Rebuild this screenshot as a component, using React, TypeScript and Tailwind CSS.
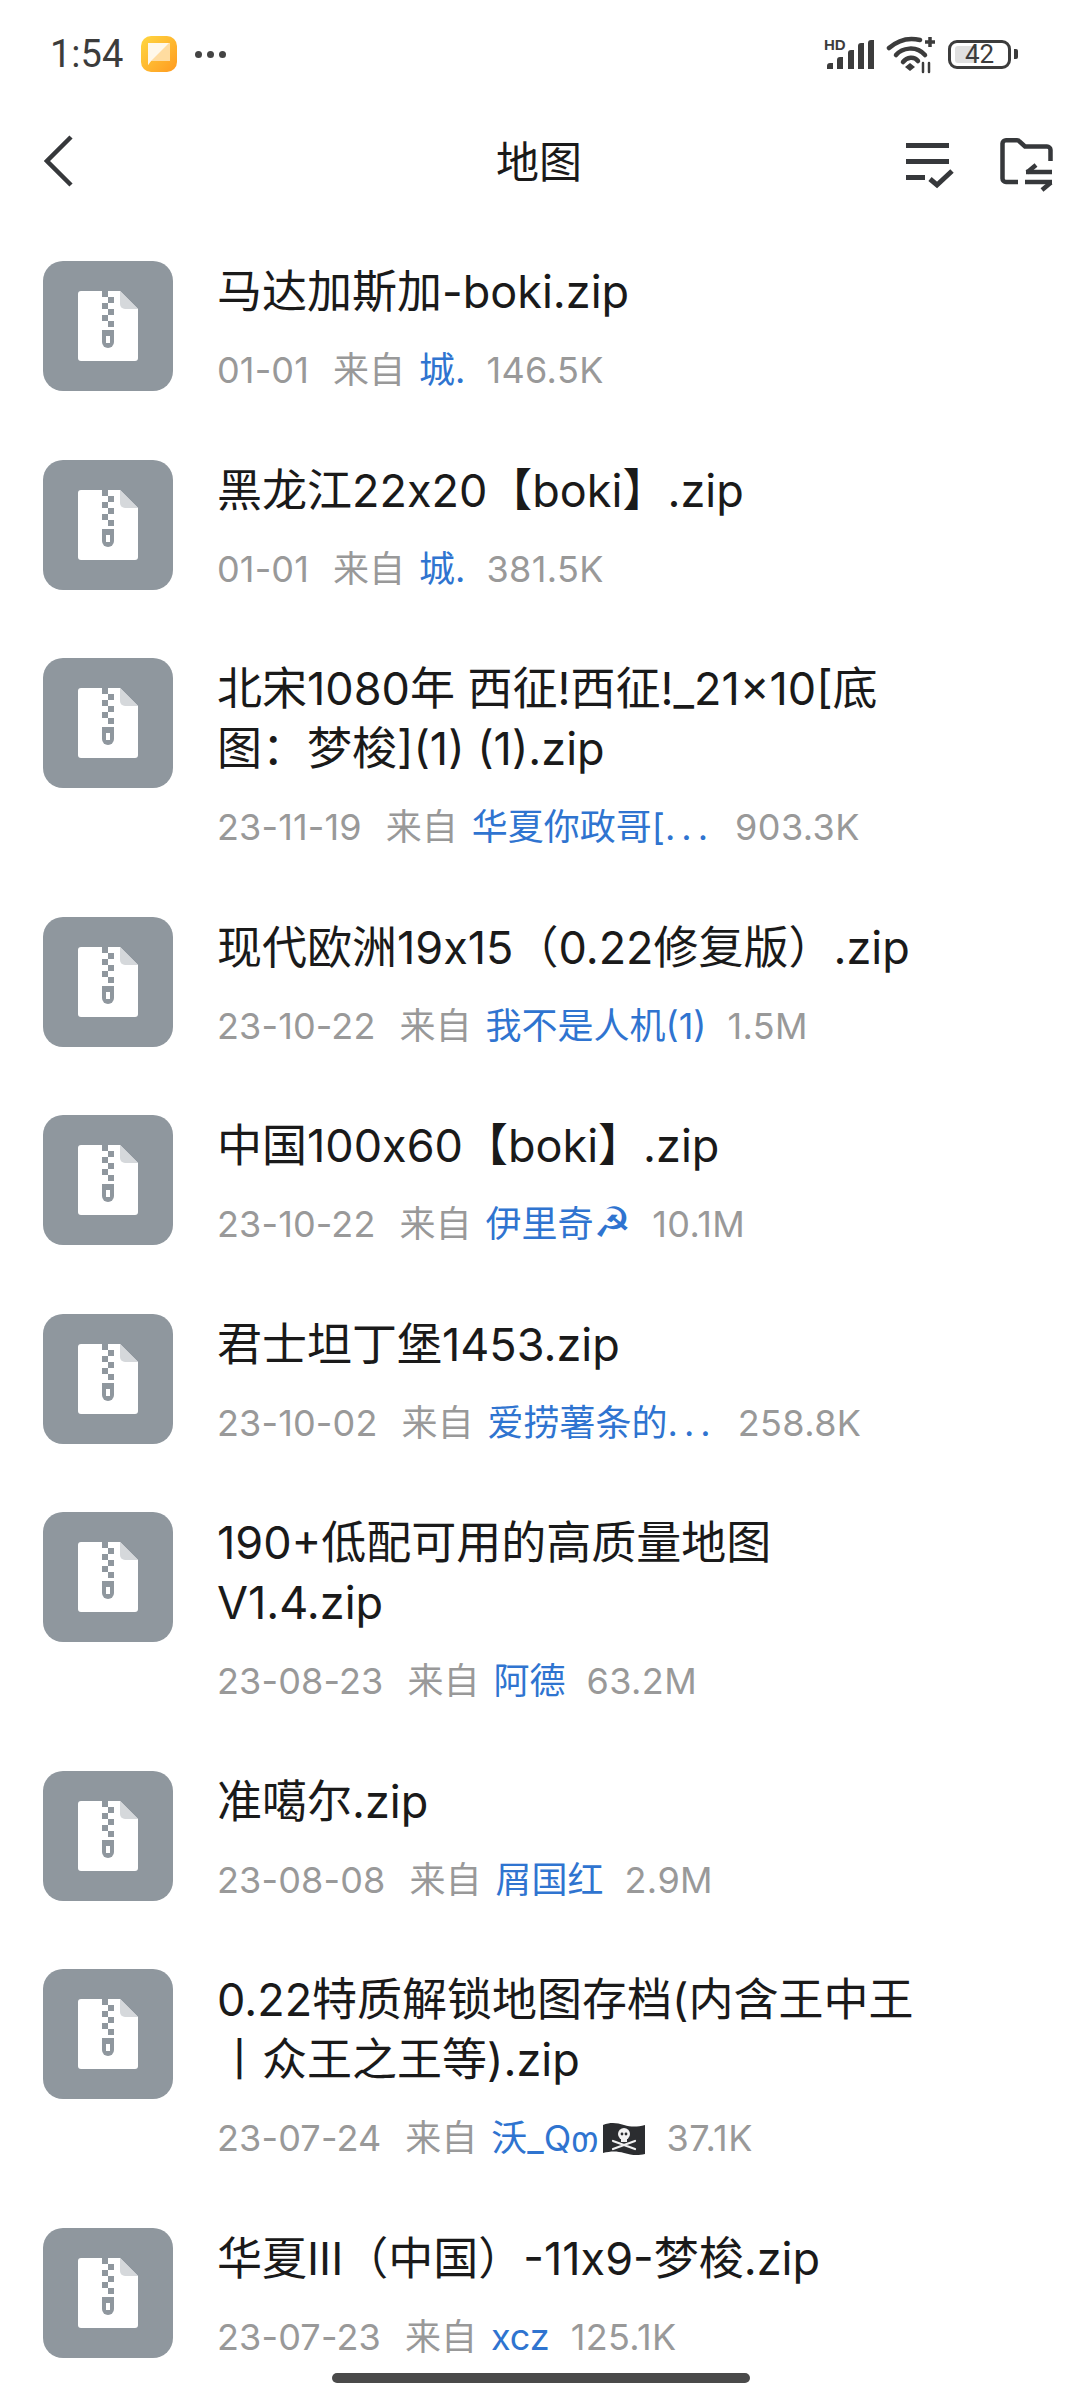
import React from "react";

type FileRow = {
  title: string[];
  date: string;
  from: React.ReactNode;
  size: string;
};

const PirateFlag = () => (
  <svg viewBox="0 0 44 34" className="inline-block w-[44px] h-[34px] ml-[3px] align-[-5px]">
    <path d="M1 3C9 0 15 1 22 3S35 5 43 3V32C35 34 29 33 22 31S9 29 1 31Z" fill="#2b2d30" />
    <circle cx="22" cy="12" r="6" fill="#f2f2f2" />
    <rect x="19" y="15" width="6" height="5" fill="#f2f2f2" />
    <circle cx="20" cy="12" r="1.4" fill="#2b2d30" />
    <circle cx="24" cy="12" r="1.4" fill="#2b2d30" />
    <path d="M11 19L33 27M33 19L11 27" stroke="#f2f2f2" strokeWidth="2.2" strokeLinecap="round" />
  </svg>
);

const Dots = () => <span className="tracking-[6px]">...</span>;

const files: FileRow[] = [
  { title: ["马达加斯加-boki.zip"], date: "01-01", from: "城.", size: "146.5K" },
  { title: ["黑龙江22x20【boki】.zip"], date: "01-01", from: "城.", size: "381.5K" },
  { title: ["北宋1080年 西征!西征!_21×10[底", "图：梦梭](1) (1).zip"], date: "23-11-19", from: <>华夏你政哥[<Dots /></>, size: "903.3K" },
  { title: ["现代欧洲19x15（0.22修复版）.zip"], date: "23-10-22", from: "我不是人机(1)", size: "1.5M" },
  { title: ["中国100x60【boki】.zip"], date: "23-10-22", from: <>伊里奇<span className="font-['DejaVu_Sans'] text-[42px] leading-none">☭</span></>, size: "10.1M" },
  { title: ["君士坦丁堡1453.zip"], date: "23-10-02", from: <>爱捞薯条的<Dots /></>, size: "258.8K" },
  { title: ["190+低配可用的高质量地图", "V1.4.zip"], date: "23-08-23", from: "阿德", size: "63.2M" },
  { title: ["准噶尔.zip"], date: "23-08-08", from: "屑国红", size: "2.9M" },
  { title: ["0.22特质解锁地图存档(内含王中王", "丨众王之王等).zip"], date: "23-07-24", from: <>沃_Q<span className="font-['DejaVu_Sans'] text-[34px] leading-none">თ</span><PirateFlag /></>, size: "37.1K" },
  { title: ["华夏III（中国）-11x9-梦梭.zip"], date: "23-07-23", from: "xcz", size: "125.1K" },
];

const ZipIcon = () => (
  <svg viewBox="0 0 130 130" className="w-[130px] h-[130px] shrink-0">
    <rect width="130" height="130" rx="20" fill="#8f979e" />
    <path d="M38 30H77L95 48V97a3 3 0 0 1-3 3H38a3 3 0 0 1-3-3V33a3 3 0 0 1 3-3Z" fill="#fff" />
    <path d="M77 30L95 48H82a5 5 0 0 1-5-5Z" fill="#d5d8db" />
    <g fill="#8f979e">
      <rect x="59" y="30" width="6" height="6" />
      <rect x="65" y="36" width="6" height="6" />
      <rect x="59" y="42" width="6" height="6" />
      <rect x="65" y="48" width="6" height="6" />
      <rect x="59" y="54" width="6" height="6" />
      <rect x="65" y="60" width="6" height="6" />
      <path d="M59 69H71V81a6 6 0 0 1-12 0Z" />
    </g>
    <rect x="63" y="75" width="4" height="7" fill="#fff" />
  </svg>
);

const StatusIcons = () => (
  <svg viewBox="0 0 165 40" className="w-[165px] h-[40px]">
    {/* signal */}
    <text x="0" y="16" fontFamily="'Liberation Sans'" fontWeight="700" fontSize="15" fill="#3c3c3c">HD</text>
    <g fill="#3c3c3c">
      <path d="M3 32a3 3 0 0 1 3-3h3v6H3Z" />
      <path d="M13 26a3 3 0 0 1 3-3h3v12h-6Z" />
      <path d="M24 19a3 3 0 0 1 3-3h3v19h-6Z" />
      <path d="M34 12a3 3 0 0 1 3-3h3v26h-6Z" />
      <path d="M44 9a3 3 0 0 1 3-3h3v29h-6Z" />
    </g>
    {/* wifi */}
    <g fill="none" stroke="#3c3c3c" strokeLinecap="round">
      <path d="M65 14C73 7 84 3 96 6" strokeWidth="4.5" />
      <path d="M72 21C78 14 92 11 101 21" strokeWidth="4.5" />
      <path d="M79 28C83 23 90 22 94 27" strokeWidth="4.5" />
      <path d="M106 3V13M101 8H111" strokeWidth="3.5" strokeLinecap="butt" />
      <path d="M99 29V38M105 29V38" strokeWidth="2.5" />
    </g>
    <path d="M81 33L86 29L91 33L86 37Z" fill="#3c3c3c" />
  </svg>
);

const ListCheckIcon = () => (
  <svg viewBox="0 0 48 46" className="w-[48px] h-[46px] overflow-visible">
    <g fill="#36383b">
      <rect x="0" y="5" width="43" height="5" />
      <rect x="0" y="21" width="43" height="5" />
      <rect x="0" y="37" width="19" height="5" />
    </g>
    <path d="M24 41L31 47L46 33" fill="none" stroke="#36383b" strokeWidth="5" />
  </svg>
);

const FolderSwapIcon = () => (
  <svg viewBox="0 0 52 46" className="w-[52px] h-[46px] overflow-visible">
    <path d="M18 44H6a3.500 3.500 0 0 1-3.500-3.500V5.500A3.500 3.500 0 0 1 6 2.200H17a3 3 0 0 1 2.500 1.300L25 8.500H47a3.500 3.500 0 0 1 3.500 3.500V23" fill="none" stroke="#36383b" strokeWidth="4.500" />
    <g fill="none" stroke="#36383b" strokeWidth="4.500">
      <path d="M26 34H52" />
      <path d="M36 27L27 34.500" />
      <path d="M25 44H52" />
      <path d="M42 52L51 44.500" />
    </g>
  </svg>
);

export default function App() {
  return (
    <div className="h-[2400px] w-[1080px] overflow-hidden bg-white relative font-['Inter','Noto_Sans_CJK_SC',sans-serif]">
      {/* status bar */}
      <div className="h-[108px] pl-[50px] pr-[62px] flex items-center justify-between">
        <div className="flex items-center">
          <span className="text-[38px] font-['Roboto'] text-[#3c3c3c] w-[91px]">1:54</span>
          <div className="w-[36px] h-[36px] rounded-[10px] bg-linear-to-br from-[#ffd740] to-[#ff9a1f] flex items-center justify-center">
            <svg viewBox="0 0 22 22" className="w-[22px] h-[22px]">
              <path d="M0 0H22V18H3L0 22Z" fill="#ffdca0" />
              <path d="M0 0H21L3 18L0 22Z" fill="#fff8ea" />
            </svg>
          </div>
          <div className="flex gap-[5px] ml-[18px]">
            <div className="w-[7px] h-[7px] rounded-full bg-[#444]" />
            <div className="w-[7px] h-[7px] rounded-full bg-[#444]" />
            <div className="w-[7px] h-[7px] rounded-full bg-[#444]" />
          </div>
        </div>
        <div className="flex items-center">
          <StatusIcons />
          <div className="relative ml-[-41px] w-[63px] h-[29px] rounded-[9px] border-[3px] border-[#3c3c3c] flex items-center justify-center">
            <div className="absolute left-[4px] top-[3px] bottom-[3px] w-[22px] bg-[#e0e0e0] rounded-[3px]" />
            <span className="relative text-[26px] leading-none font-['Roboto'] text-[#3c3c3c]">42</span>
          </div>
          <div className="w-[4px] h-[10px] ml-[3px] bg-[#3c3c3c] rounded-r-[2px]" />
        </div>
      </div>

      {/* title bar */}
      <div className="h-[105px] pl-[44px] pr-[28px] flex items-center justify-between relative">
        <svg viewBox="0 0 30 52" className="w-[30px] h-[52px]">
          <path d="M27 2L3 26L27 50" fill="none" stroke="#36383b" strokeWidth="4.500" />
        </svg>
        <span className="absolute left-[496px] top-[27px] text-[43px] leading-[54px] text-[#1a1a1a]">地图</span>
        <div className="flex items-center gap-[46px]">
          <ListCheckIcon />
          <FolderSwapIcon />
        </div>
      </div>

      {/* file list */}
      <div className="pt-[48px] px-[43px]">
        {files.map((file, index) => (
          <div key={index} className="flex items-start gap-[44px] pb-[64.5px]">
            <ZipIcon />
            <div className="min-w-0 pt-[1px]">
              {file.title.map((line, i) => (
                <div key={i} className="text-[45px] leading-[60px] text-[#1a1a1a] whitespace-nowrap">{line}</div>
              ))}
              <div className="mt-[23px] h-[50px] flex items-center text-[36px] text-[#999999] whitespace-nowrap">
                <span className="tracking-[0.15px]">{file.date}</span>
                <span className="ml-[24px]">来自</span>
                <span className="ml-[14px] text-[#2f74d0]">{file.from}</span>
                <span className="ml-[21px] tracking-[0.4px]">{file.size}</span>
              </div>
            </div>
          </div>
        ))}
      </div>

      {/* home indicator, sits over the list */}
      <div className="absolute left-[332px] top-[2373px] w-[418px] h-[10px] rounded-full bg-[#4a4a4a]" />
    </div>
  );
}
